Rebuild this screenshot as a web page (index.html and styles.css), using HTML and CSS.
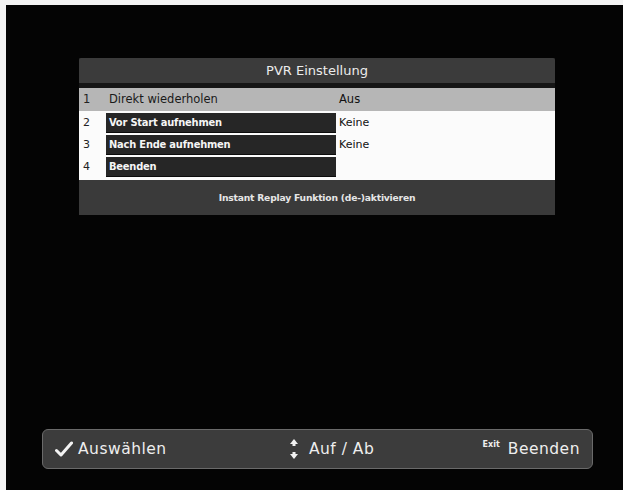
FILE: index.html
```html
<!DOCTYPE html>
<html lang="de">
<head>
<meta charset="utf-8">
<title>PVR Einstellung</title>
<link rel="stylesheet" href="styles.css">
</head>
<body>
<div class="screen">
  <div class="panel">
    <div class="title">PVR Einstellung</div>
    <div class="rows">
      <div class="row selected">
        <span class="num">1</span>
        <span class="label">Direkt wiederholen</span>
        <span class="value">Aus</span>
      </div>
      <div class="row">
        <span class="num">2</span>
        <span class="label">Vor Start aufnehmen</span>
        <span class="value">Keine</span>
      </div>
      <div class="row">
        <span class="num">3</span>
        <span class="label">Nach Ende aufnehmen</span>
        <span class="value">Keine</span>
      </div>
      <div class="row">
        <span class="num">4</span>
        <span class="label">Beenden</span>
        <span class="value"></span>
      </div>
    </div>
    <div class="help">Instant Replay Funktion (de-)aktivieren</div>
  </div>

  <div class="footer">
    <div class="key key-left">
      <svg class="icon-check" width="18" height="16" viewBox="0 0 18 16">
        <path d="M1.5 9.5 L6 14 L16.5 2" fill="none" stroke="#f2f2f2" stroke-width="3" stroke-linecap="round" stroke-linejoin="round"/>
      </svg>
      <span>Auswählen</span>
    </div>
    <div class="key key-mid">
      <svg class="icon-updown" width="10" height="22" viewBox="0 0 10 22">
        <path d="M5 1 L9 6 L1 6 Z" fill="#f2f2f2"/>
        <rect x="3.5" y="5" width="3" height="3" fill="#f2f2f2"/>
        <rect x="3.5" y="14" width="3" height="3" fill="#f2f2f2"/>
        <path d="M5 21 L9 16 L1 16 Z" fill="#f2f2f2"/>
      </svg>
      <span>Auf / Ab</span>
    </div>
    <div class="key key-right">
      <span class="exit">Exit</span>
      <span>Beenden</span>
    </div>
  </div>
</div>
</body>
</html>
```

FILE: styles.css
```css
html, body {
  margin: 0;
  padding: 0;
  background: #f4f4f4;
}

.screen {
  margin: 5px 0 0 6px;
  width: 617px;
  height: 485px;
  background: #040404;
  display: flex;
  flex-direction: column;
  font-family: "DejaVu Sans", "Liberation Sans", sans-serif;
}

.panel {
  margin: 53px 0 0 73px;
  width: 476px;
  display: flex;
  flex-direction: column;
  background: #151515;
}

.title {
  height: 25px;
  background: #3b3b3b;
  color: #ececec;
  font-size: 13px;
  line-height: 26px;
  text-align: center;
  border-radius: 2px 2px 0 0;
}

.rows {
  margin-top: 5px;
  background: #fbfbfb;
  padding-bottom: 4px;
  display: flex;
  flex-direction: column;
  gap: 3px;
}

.row {
  display: grid;
  grid-template-columns: 27px 230px 1fr;
  height: 19px;
  font-size: 11px;
  line-height: 19px;
  color: #111;
}

.row.selected {
  height: 23px;
  line-height: 23px;
  background: #b6b6b6;
  margin-bottom: -1px;
  font-size: 11.5px;
}

.num {
  padding-left: 4px;
  color: #222;
}

.label {
  background: #262626;
  color: #f5f5f5;
  font-family: "DejaVu Sans Condensed", "DejaVu Sans", sans-serif;
  font-stretch: condensed;
  font-weight: bold;
  padding-left: 3px;
  letter-spacing: -0.2px;
  border-bottom: 1px solid #0c0c0c;
}

.row.selected .label {
  background: transparent;
  color: #1a1a1a;
  font-family: "DejaVu Sans", sans-serif;
  font-stretch: normal;
  font-weight: normal;
  border-bottom: none;
  letter-spacing: 0;
}

.value {
  padding-left: 3px;
}

.help {
  height: 35px;
  background: #3a3a3a;
  color: #e6e6e6;
  font-size: 9.2px;
  font-weight: bold;
  line-height: 36px;
  text-align: center;
  letter-spacing: -0.2px;
}

.footer {
  margin: auto 0 21px 36px;
  width: 551px;
  height: 40px;
  box-sizing: border-box;
  border: 1px solid #6a6a6a;
  border-radius: 6px;
  background: #3c3c3c;
  display: flex;
  align-items: center;
  justify-content: space-between;
  padding: 0 12px 0 12px;
  color: #eeeeee;
  font-size: 15.5px;
  letter-spacing: 0.5px;
}

.key {
  display: flex;
  align-items: center;
}

.icon-check {
  margin-right: 5px;
}

.key-mid {
  margin-left: 14px;
}

.icon-updown {
  margin-right: 10px;
}

.exit {
  font-size: 8px;
  font-weight: bold;
  letter-spacing: 0;
  margin-right: 8px;
  position: relative;
  top: -5px;
}
```
